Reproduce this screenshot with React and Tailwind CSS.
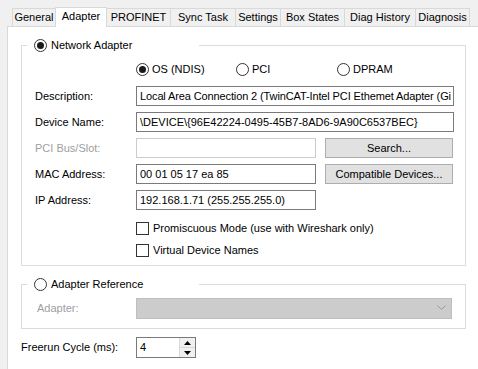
import React from 'react';

const tabs = [
    { name: 'General', w: 'w-[44px]' },
    { name: 'Adapter', w: 'w-[52px]', active: true },
    { name: 'PROFINET', w: 'w-[65px]' },
    { name: 'Sync Task', w: 'w-[66px]' },
    { name: 'Settings', w: 'w-[46px]' },
    { name: 'Box States', w: 'w-[65px]' },
    { name: 'Diag History', w: 'w-[72px]' },
    { name: 'Diagnosis', w: 'w-[55px]' },
];

function Radio({ checked }) {
    return (
        <span className="w-[13px] h-[13px] rounded-full border border-[#333333] bg-white flex items-center justify-center shrink-0">
            {checked && <span className="w-[7px] h-[7px] rounded-full bg-[#1a1a1a]"></span>}
        </span>
    );
}

function Checkbox() {
    return <span className="w-[13px] h-[13px] border border-[#333333] bg-white shrink-0"></span>;
}

function Field({ label, value, width = 'w-[318px]', disabled, button, tight }) {
    return (
        <div className="flex items-center h-[20px]">
            <span className={`w-[101px] shrink-0 ${disabled ? 'text-[#a0a0a0]' : 'text-black'}`}>{label}</span>
            <div
                className={`${width} h-[20px] border ${disabled ? 'border-[#cccccc]' : 'border-[#7a7a7a]'} bg-white flex items-center px-[3px] overflow-hidden whitespace-nowrap shrink-0 ${tight ? 'tracking-[-0.12px]' : ''}`}
            >
                {value}
            </div>
            {button && (
                <div className="ml-[9px] w-[128px] h-[20px] border border-[#adadad] bg-[#e1e1e1] flex items-center justify-center shrink-0">
                    {button}
                </div>
            )}
        </div>
    );
}

export default function App() {
    return (
        <div className="w-[478px] h-[369px] bg-[#f0f0f0] overflow-hidden flex flex-col font-['Liberation_Sans',Arial,sans-serif] text-[11px] text-black leading-none">
            {/* Tab strip */}
            <div className="flex items-end pl-[12px] pt-[6px] h-[26px]">
                {tabs.map((t) =>
                    t.active ? (
                        <div
                            key={t.name}
                            className={`${t.w} h-[20px] -ml-px bg-white border border-b-0 border-[#d9d9d9] flex items-center justify-center relative z-10 -mb-px pb-[2px]`}
                        >
                            {t.name}
                        </div>
                    ) : (
                        <div
                            key={t.name}
                            className={`${t.w} h-[18px] -ml-px first:ml-0 bg-[#f0f0f0] border border-b-0 border-[#d9d9d9] flex items-center justify-center`}
                        >
                            {t.name}
                        </div>
                    )
                )}
            </div>

            {/* Tab page */}
            <div className="flex-1 ml-[7px] bg-white border-t border-l border-[#d9d9d9] pl-[13px] pt-[11px]">
                <fieldset className="w-[445px] border border-[#dcdcdc] pl-[13px] pb-[8px]">
                    <legend className="-ml-[8px] w-[172px] pl-[7px] h-[14px] flex items-center gap-[4px]">
                        <Radio checked />
                        <span>Network Adapter</span>
                    </legend>

                    <div className="flex items-center h-[13px] mt-[11px] pl-[101px]">
                        <div className="flex items-center gap-[3px] w-[100px]">
                            <Radio checked />
                            <span>OS (NDIS)</span>
                        </div>
                        <div className="flex items-center gap-[3px] w-[101px]">
                            <Radio />
                            <span>PCI</span>
                        </div>
                        <div className="flex items-center gap-[3px]">
                            <Radio />
                            <span>DPRAM</span>
                        </div>
                    </div>

                    <div className="flex flex-col gap-[6px] mt-[10px]">
                        <Field
                            label="Description:"
                            value="Local Area Connection 2 (TwinCAT-Intel PCI Ethemet Adapter (Gi"
                            tight
                        />
                        <Field label="Device Name:" value="\DEVICE\{96E42224-0495-45B7-8AD6-9A90C6537BEC}" />
                        <Field label="PCI Bus/Slot:" value="" width="w-[180px]" disabled button="Search..." />
                        <Field label="MAC Address:" value="00 01 05 17 ea 85" width="w-[180px]" button="Compatible Devices..." />
                        <Field label="IP Address:" value="192.168.1.71 (255.255.255.0)" width="w-[180px]" />
                    </div>

                    <div className="flex flex-col gap-[9px] mt-[12px] pl-[101px]">
                        <div className="flex items-center gap-[4px] h-[13px]">
                            <Checkbox />
                            <span>Promiscuous Mode (use with Wireshark only)</span>
                        </div>
                        <div className="flex items-center gap-[4px] h-[13px]">
                            <Checkbox />
                            <span>Virtual Device Names</span>
                        </div>
                    </div>
                </fieldset>

                <fieldset className="w-[445px] border border-[#dcdcdc] pl-[15px] pb-[10px] mt-[11px]">
                    <legend className="-ml-[10px] w-[172px] pl-[7px] h-[14px] flex items-center gap-[4px]">
                        <Radio />
                        <span>Adapter Reference</span>
                    </legend>
                    <div className="flex items-center h-[20px] mt-[7px]">
                        <span className="w-[99px] shrink-0 text-[#a0a0a0]">Adapter:</span>
                        <div className="w-[316px] h-[21px] bg-[#cccccc] border border-[#bfbfbf] flex items-center justify-end pr-[5px]">
                            <svg width="9" height="6" viewBox="0 0 9 6" fill="none">
                                <path d="M0.5 0.5 L4.5 4.5 L8.5 0.5" stroke="#9a9a9a" strokeWidth="1" />
                            </svg>
                        </div>
                    </div>
                </fieldset>

                <div className="flex items-center mt-[8px]">
                    <span className="w-[115px] shrink-0">Freerun Cycle (ms):</span>
                    <div className="w-[60px] h-[21px] border border-[#7a7a7a] bg-white flex">
                        <div className="flex-1 flex items-center pl-[3px]">4</div>
                        <div className="w-[16px] flex flex-col border-l border-[#d9d9d9] bg-[#f0f0f0]">
                            <div className="flex-1 flex items-center justify-center border-b border-[#d9d9d9]">
                                <svg width="7" height="4" viewBox="0 0 7 4">
                                    <path d="M0 4 L3.5 0 L7 4 Z" fill="#000" />
                                </svg>
                            </div>
                            <div className="flex-1 flex items-center justify-center">
                                <svg width="7" height="4" viewBox="0 0 7 4">
                                    <path d="M0 0 L3.5 4 L7 0 Z" fill="#000" />
                                </svg>
                            </div>
                        </div>
                    </div>
                </div>
            </div>
        </div>
    );
}
